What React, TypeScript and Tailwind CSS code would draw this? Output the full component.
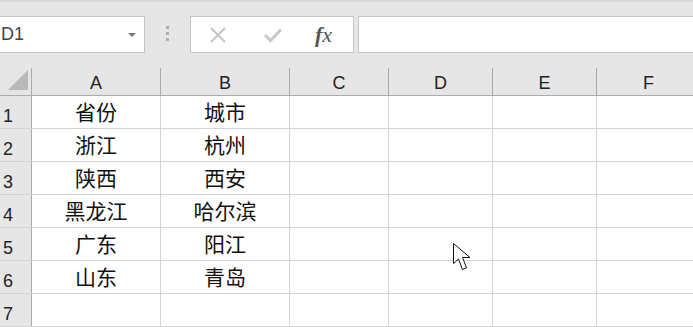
import React from "react";

const cols = [
  { name: "A", w: "w-[129px]" },
  { name: "B", w: "w-[129px]" },
  { name: "C", w: "w-[99px]" },
  { name: "D", w: "w-[104px]" },
  { name: "E", w: "w-[104px]" },
  { name: "F", w: "w-[104px]" },
];

const data: string[][] = [
  ["省份", "城市"],
  ["浙江", "杭州"],
  ["陕西", "西安"],
  ["黑龙江", "哈尔滨"],
  ["广东", "阳江"],
  ["山东", "青岛"],
  ["", ""],
];

const Cursor = () => (
  <svg width="20" height="30" viewBox="0 0 20 30" className="absolute left-[452px] top-[242px]">
    <path
      d="M1.5 1.5 L1.5 21.5 L6.5 17 L10.5 27.5 L14.5 25.8 L10.5 15.5 L18 15.5 Z"
      fill="#fff"
      stroke="#111"
      strokeWidth="1"
      strokeLinejoin="miter"
    />
  </svg>
);

export default function App() {
  return (
    <div
      className="relative h-[327px] w-[693px] overflow-hidden bg-white"
      style={{ fontFamily: '"Liberation Sans", "Noto Sans CJK SC", sans-serif' }}
    >
      {/* formula bar */}
      <div className="flex h-[68px] items-start border-t-2 border-[#d8d8d8] bg-[#e6e6e6] pt-[14px]">
        <div className="flex h-[37px] w-[145px] shrink-0 items-center justify-between border border-l-0 border-[#c6c6c6] bg-white pl-[1px] pr-[8px]">
          <span className="text-[18px] text-[#444]">D1</span>
          <span className="h-0 w-0 border-x-[4px] border-t-[4px] border-x-transparent border-t-[#777]" />
        </div>
        <div className="flex w-[45px] shrink-0 flex-col items-center gap-[3px] pt-[10px]">
          <span className="h-[3px] w-[3px] bg-[#b0b0b0]" />
          <span className="h-[3px] w-[3px] bg-[#b0b0b0]" />
          <span className="h-[3px] w-[3px] bg-[#b0b0b0]" />
        </div>
        <div className="flex h-[37px] w-[164px] shrink-0 items-center border border-[#c6c6c6] bg-white">
          <svg width="18" height="18" viewBox="0 0 18 18" className="ml-[18px]">
            <path d="M2 2 L16 16 M16 2 L2 16" stroke="#c4c4c4" strokeWidth="2" />
          </svg>
          <svg width="20" height="16" viewBox="0 0 20 16" className="ml-[36px]">
            <path d="M2 8 L7.5 13.5 L18 2.5" stroke="#c8c8c8" strokeWidth="3" fill="none" />
          </svg>
          <span
            className="ml-[32px] text-[22px] italic text-[#555]"
            style={{ fontFamily: '"Liberation Serif", serif' }}
          >
            <span className="font-bold">f</span>x
          </span>
        </div>
        <div className="ml-[4px] h-[37px] flex-1 border border-r-0 border-[#c6c6c6] bg-white" />
      </div>

      {/* column headers */}
      <div className="flex h-[28px] border-b border-[#ababab] bg-[#e6e6e6]">
        <div className="relative w-[32px] shrink-0 border-r border-[#ababab]">
          <span className="absolute left-[8px] top-[2px] h-0 w-0 border-b-[20px] border-l-[20px] border-b-[#b8b8b8] border-l-transparent" />
        </div>
        {cols.map((c) => (
          <div
            key={c.name}
            className={`${c.w} flex shrink-0 items-end justify-center border-r border-[#ababab] pb-[1px] text-[18px] leading-[22px] text-[#222]`}
          >
            {c.name}
          </div>
        ))}
      </div>

      {/* rows */}
      {data.map((row, i) => (
        <div key={i} className="flex h-[33px] border-b border-[#d4d4d4]">
          <div className="flex w-[32px] shrink-0 items-end border-r border-[#ababab] bg-[#e6e6e6] pb-[1px] pl-[3px] text-[18px] leading-[22px] text-[#222]">
            {i + 1}
          </div>
          {cols.map((c, j) => (
            <div
              key={c.name}
              className={`${c.w} flex shrink-0 items-center justify-center border-r border-[#d4d4d4] text-[21px] text-[#111]`}
              style={{ fontFamily: '"Noto Sans CJK SC", sans-serif' }}
            >
              {row[j] ?? ""}
            </div>
          ))}
        </div>
      ))}

      <Cursor />
    </div>
  );
}
